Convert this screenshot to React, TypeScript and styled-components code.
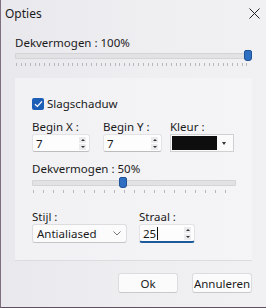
import React from "react";
import styled, { createGlobalStyle } from "styled-components";

const Global = createGlobalStyle`
  html, body { margin: 0; padding: 0; }
  body { font-family: "Noto Sans", "Open Sans", sans-serif; }
`;

const Window = styled.div`
  width: 266px;
  height: 308px;
  box-sizing: border-box;
  background: linear-gradient(90deg, #e9e8ec 0%, #efeef1 60%, #f1f1f3 100%);
  border-left: 1px solid #7d6f7f;
  border-bottom: 1px solid #5e5060;
  display: flex;
  flex-direction: column;
  color: #1b1b1b;
  font-size: 11.5px;
  overflow: hidden;
`;

const TitleBar = styled.div`
  height: 27px;
  display: flex;
  align-items: center;
  justify-content: space-between;
  padding: 0 6px 0 4px;
  font-size: 12px;
`;

const Content = styled.div`
  padding: 8px 14px 0 14px;
  display: flex;
  flex-direction: column;
`;

const Label = styled.div`
  line-height: 15px;
  white-space: nowrap;
`;

const SliderWrap = styled.div<{ $w: number; $top: number }>`
  position: relative;
  width: ${(p) => p.$w}px;
  height: 20px;
  margin-top: ${(p) => p.$top}px;
`;

const Track = styled.div`
  position: absolute;
  left: 0;
  right: 0;
  top: 3px;
  height: 4px;
  background: #e2e2e4;
  border: 1px solid #d4d4d6;
  border-radius: 1px;
`;

const Thumb = styled.div`
  position: absolute;
  top: 0;
  width: 6px;
  height: 9px;
  background: #2f6fc1;
  border: 1px solid #1f5296;
  border-radius: 2px 2px 3px 3px;
`;

const Ticks = styled.div<{ $step: number }>`
  position: absolute;
  left: 1px;
  right: 1px;
  top: 13px;
  height: 3px;
  background: repeating-linear-gradient(
    90deg,
    #b8b8bc 0px,
    #b8b8bc 1px,
    transparent 1px,
    transparent ${(p) => p.$step}px
  );
`;

const Group = styled.div`
  margin-top: 8px;
  background: rgba(248, 248, 250, 0.55);
  border-bottom: 1px solid #dcdbe0;
  padding: 16px 16px 17px 17px;
  display: flex;
  flex-direction: column;
`;

const CheckRow = styled.div`
  display: flex;
  align-items: center;
  gap: 3px;
  margin-top: 2px;
  font-size: 11.5px;
`;

const CheckBox = styled.div`
  width: 12px;
  height: 12px;
  background: #1d5fb6;
  border-radius: 2px;
  display: flex;
  align-items: center;
  justify-content: center;
`;

const Row = styled.div<{ $gap: number; $top: number }>`
  display: flex;
  gap: ${(p) => p.$gap}px;
  margin-top: ${(p) => p.$top}px;
`;

const Field = styled.div<{ $w?: number }>`
  display: flex;
  flex-direction: column;
  ${(p) => (p.$w ? `width: ${p.$w}px;` : "")}
`;

const Input = styled.div<{ $w: number; $h: number; $focus?: boolean }>`
  width: ${(p) => p.$w}px;
  height: ${(p) => p.$h}px;
  box-sizing: border-box;
  background: #fdfdfd;
  border: 1px solid #e3e3e5;
  border-bottom: ${(p) => (p.$focus ? "2px solid #1d5a9c" : "1px solid #bdbdc0")};
  border-radius: 3px;
  display: flex;
  align-items: center;
  padding-left: 3px;
  font-size: 11.5px;
  position: relative;
`;

const Spin = styled.div`
  margin-left: auto;
  margin-right: 3px;
  width: 7px;
  display: flex;
  flex-direction: column;
  gap: 1px;
`;

const SpinBtn = styled.div<{ $down?: boolean }>`
  height: 6px;
  background: #ececee;
  display: flex;
  align-items: center;
  justify-content: center;
  &::after {
    content: "";
    border-left: 2px solid transparent;
    border-right: 2px solid transparent;
    ${(p) => (p.$down ? "border-top: 2px solid #333;" : "border-bottom: 2px solid #333;")}
  }
`;

const ColorBox = styled.div`
  width: 64px;
  height: 18px;
  box-sizing: border-box;
  background: #fbfbfb;
  border: 1px solid #d0d0d3;
  display: flex;
  align-items: center;
  padding: 1px;
`;

const Swatch = styled.div`
  width: 45px;
  height: 14px;
  background: #0e0e0e;
`;

const Arrow = styled.div`
  margin-left: auto;
  margin-right: 6px;
  border-left: 2px solid transparent;
  border-right: 2px solid transparent;
  border-top: 3px solid #333;
`;

const Select = styled.div`
  width: 95px;
  height: 19px;
  box-sizing: border-box;
  background: #fbfbfb;
  border: 1px solid #dddde0;
  border-bottom-color: #c4c4c7;
  border-radius: 3px;
  display: flex;
  align-items: center;
  padding: 0 5px 0 4px;
  justify-content: space-between;
`;

const Caret = styled.span`
  width: 3px;
  height: 13px;
  border-left: 1px solid #111;
  margin-left: 1px;
`;

const Footer = styled.div`
  display: flex;
  justify-content: flex-end;
  gap: 14px;
  padding-top: 12px;
`;

const Button = styled.div`
  width: 60px;
  height: 20px;
  box-sizing: border-box;
  background: #fbfbfb;
  border: 1px solid #dcdcdf;
  border-bottom-color: #c9c9cc;
  border-radius: 3px;
  display: flex;
  align-items: center;
  justify-content: center;
  font-size: 11.5px;
`;

function Slider({ width, value, step, top }: { width: number; value: number; step: number; top: number }) {
  return (
    <SliderWrap $w={width} $top={top}>
      <Track />
      <Ticks $step={step} />
      <Thumb style={{ left: Math.round((width - 7) * value) }} />
    </SliderWrap>
  );
}

function Spinner() {
  return (
    <Spin>
      <SpinBtn />
      <SpinBtn $down />
    </Spin>
  );
}

export default function App() {
  return (
    <>
      <Global />
      <Window>
        <TitleBar>
          <span>Opties</span>
          <svg width="11" height="11" viewBox="0 0 11 11">
            <path d="M0.5 0.5 L10.5 10.5 M10.5 0.5 L0.5 10.5" stroke="#222" strokeWidth="1" />
          </svg>
        </TitleBar>
        <Content>
          <Label>Dekvermogen : 100%</Label>
          <Slider width={237} value={0.995} step={4.7} top={0} />
          <Group>
            <CheckRow>
              <CheckBox>
                <svg width="9" height="8" viewBox="0 0 9 8">
                  <path d="M1 4.2 L3.4 6.4 L8 1.4" stroke="#fff" strokeWidth="1.3" fill="none" />
                </svg>
              </CheckBox>
              <span>Slagschaduw</span>
            </CheckRow>
            <Row $gap={0} $top={8}>
              <Field $w={71}>
                <Label>Begin X :</Label>
                <Input $w={58} $h={18}>
                  7
                  <Spinner />
                </Input>
              </Field>
              <Field $w={67}>
                <Label>Begin Y :</Label>
                <Input $w={59} $h={18}>
                  7
                  <Spinner />
                </Input>
              </Field>
              <Field>
                <Label>Kleur :</Label>
                <ColorBox>
                  <Swatch />
                  <Arrow />
                </ColorBox>
              </Field>
            </Row>
            <Row $gap={0} $top={9}>
              <Field>
                <Label>Dekvermogen : 50%</Label>
                <Slider width={204} value={0.44} step={10.1} top={1} />
              </Field>
            </Row>
            <Row $gap={12} $top={12}>
              <Field>
                <Label>Stijl :</Label>
                <Select>
                  <span>Antialiased</span>
                  <svg width="8" height="5" viewBox="0 0 8 5">
                    <path d="M0.5 0.5 L4 4 L7.5 0.5" stroke="#777" strokeWidth="1" fill="none" />
                  </svg>
                </Select>
              </Field>
              <Field>
                <Label>Straal :</Label>
                <Input $w={56} $h={19} $focus>
                  25
                  <Caret />
                  <Spinner />
                </Input>
              </Field>
            </Row>
          </Group>
          <Footer>
            <Button>Ok</Button>
            <Button>Annuleren</Button>
          </Footer>
        </Content>
      </Window>
    </>
  );
}
